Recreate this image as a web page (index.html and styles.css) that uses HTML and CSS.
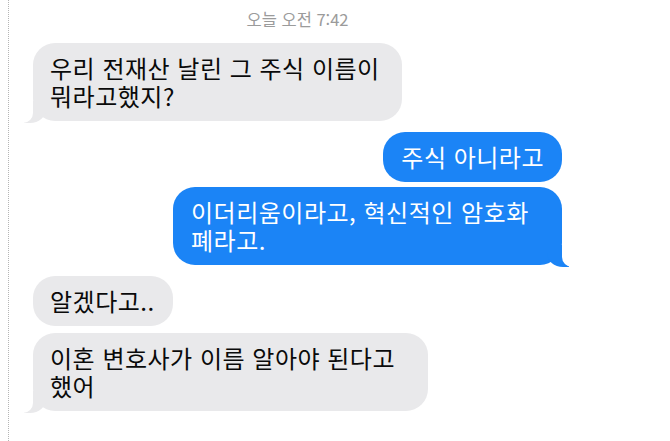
FILE: index.html
```html
<!DOCTYPE html>
<html lang="ko">
<head>
<meta charset="utf-8">
<link rel="stylesheet" href="styles.css">
</head>
<body>
<div class="screen">
  <div class="chat">
    <div class="stamp">오늘 오전 7:42</div>
    <div class="bubble in tail w1">우리 전재산 날린 그 주식 이름이<br>뭐라고했지?</div>
    <div class="bubble out gap-l">주식 아니라고</div>
    <div class="bubble out tail gap-s w3">이더리움이라고, 혁신적인 암호화<br>폐라고.</div>
    <div class="bubble in gap-l">알겠다고..</div>
    <div class="bubble in tail gap-m w5">이혼 변호사가 이름 알아야 된다고<br>했어</div>
  </div>
</div>
</body>
</html>
```
FILE: styles.css
```css
html, body {
  margin: 0;
  padding: 0;
  background: #ffffff;
}
body {
  width: 670px;
  height: 441px;
  overflow: hidden;
  font-family: "Noto Sans CJK KR", "Noto Sans", sans-serif;
}
.screen {
  margin-left: 8px;
  height: 441px;
  border-left: 1px dotted #b5b5b5;
  box-sizing: border-box;
}
.chat {
  display: flex;
  flex-direction: column;
  padding: 9px 108px 0 24px;
}
.stamp {
  align-self: center;
  font-size: 16.5px;
  line-height: 20px;
  color: #9b9b9b;
  margin-bottom: 14px;
}
.bubble {
  position: relative;
  box-sizing: border-box;
  border-radius: 22px;
  padding: 11px 18px 11px 17px;
  font-size: 24px;
  line-height: 28px;
  letter-spacing: 0.5px;
  white-space: nowrap;
}
.in {
  align-self: flex-start;
  background: #e9e9eb;
  color: #0a0a0a;
}
.out {
  align-self: flex-end;
  background: #1b84f6;
  color: #ffffff;
  padding: 11px 18px;
}
.gap-s { margin-top: 5px; }
.gap-m { margin-top: 7px; }
.gap-l { margin-top: 11px; }
.w1 { width: 369px; }
.w3 { width: 389px; }
.w5 { width: 395px; }

.tail.in::before {
  content: "";
  position: absolute;
  bottom: -2px;
  left: -9px;
  width: 22px;
  height: 22px;
  background: #e9e9eb;
  border-bottom-right-radius: 16px 14px;
}
.tail.in::after {
  content: "";
  position: absolute;
  bottom: -2px;
  left: -13px;
  width: 13px;
  height: 22px;
  background: #ffffff;
  border-bottom-right-radius: 10px;
}
.tail.out::before {
  content: "";
  position: absolute;
  bottom: -2px;
  right: -7px;
  width: 22px;
  height: 22px;
  background: #1b84f6;
  border-bottom-left-radius: 16px 14px;
}
.tail.out::after {
  content: "";
  position: absolute;
  bottom: -2px;
  right: -13px;
  width: 13px;
  height: 22px;
  background: #ffffff;
  border-bottom-left-radius: 10px;
}
```
